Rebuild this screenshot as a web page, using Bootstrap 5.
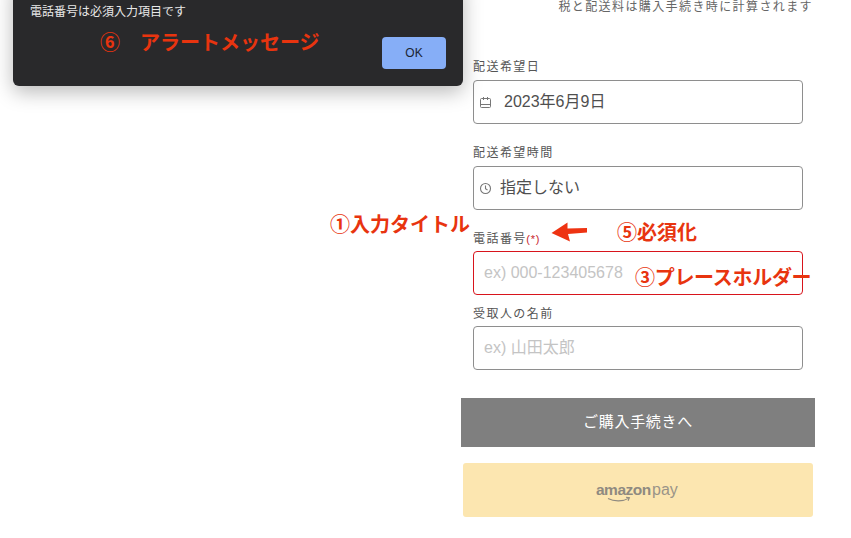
<!DOCTYPE html>
<html lang="ja">
<head>
<meta charset="utf-8">
<title>ご購入手続き</title>
<link href="https://cdn.jsdelivr.net/npm/bootstrap@5.3.0/dist/css/bootstrap.min.css" rel="stylesheet">
<style>
html,body{height:100%;overflow:hidden;background:#fff}
body{font-family:"Liberation Sans","Noto Sans CJK JP",sans-serif;position:relative;color:#4a4a4a}
.sheet{width:354px;margin-left:461px}
.taxnote{font-size:12px;line-height:12px;letter-spacing:1.4px;color:#666;text-align:right;padding:1px 2px 0 0;margin-bottom:47px}
.fieldbox{padding:0 12px}
.fieldlabel{display:block;font-size:12px;line-height:14px;letter-spacing:1.45px;color:#555;margin:0 0 6px}
.fieldctl{height:44px;border:1px solid #8e8e8e;border-radius:4px;display:flex;align-items:center;padding:0 10px;font-size:16px;color:#4f4f4f;background:#fff}
.fieldctl svg{flex:none;margin-left:-5px}
.gapdate{margin-bottom:22px}
.ph{color:#c4c4c4}
.req{color:#c8242c;font-size:11px;letter-spacing:.8px;margin-left:-.5px}
.err{border-color:#d8141c}
.buybtn{background:#7f7f7f;color:#fff;font-size:15px;letter-spacing:.7px;height:49px;border:0;border-radius:0;width:100%;display:flex;align-items:center;justify-content:center}
.amzbtn{background:#fce6b0;height:54px;margin:16px 2px 0;border-radius:3px;border:0;display:flex;align-items:center;justify-content:center;width:350px;padding:4px 0 0}
.alertbox{position:absolute;left:13px;top:-20px;width:450px;height:106px;background:#29292b;border-radius:0 0 6px 6px;box-shadow:0 6px 20px rgba(0,0,0,.28)}
.alerttext{position:absolute;left:17px;top:24px;font-size:12px;line-height:16px;color:#e8e8e8}
.okbtn{position:absolute;left:369px;top:57px;width:64px;height:32px;background:#86aef7;border:0;border-radius:4px;font-size:12px;color:#1b2433;padding:0}
.note{position:absolute;color:#e8340f;font-weight:700;white-space:nowrap;line-height:24px;font-size:20px;font-family:"Noto Sans CJK JP","Liberation Sans",sans-serif}
</style>
</head>
<body>
<main class="sheet">
  <p class="taxnote">税と配送料は購入手続き時に計算されます</p>
  <div class="fieldbox">
    <label class="fieldlabel">配送希望日</label>
    <div class="fieldctl gapdate">
      <svg width="13" height="13" viewBox="0 0 13 13" fill="none" stroke="#777" stroke-width="1"><rect x="1.5" y="2.5" width="10" height="9" rx="1"/><path d="M1.5 8.500h10M4.500 1v3M8.500 1v3"/></svg>
      <span style="margin-left:12px">2023年6月9日</span>
    </div>
    <label class="fieldlabel">配送希望時間</label>
    <div class="fieldctl">
      <svg width="13" height="13" viewBox="0 0 13 13" fill="none" stroke="#777" stroke-width="1.1"><circle cx="6.5" cy="6.5" r="5"/><path d="M6.5 3.5v3.2l2 1.3"/></svg>
      <span style="margin-left:8px">指定しない</span>
    </div>
    <label class="fieldlabel" style="margin-top:22px;margin-bottom:5px;height:14px">電話番号<span class="req">(*)</span></label>
    <div class="fieldctl err"><span class="ph">ex) 000-123405678</span></div>
    <label class="fieldlabel" style="margin-top:12px;margin-bottom:5px">受取人の名前</label>
    <div class="fieldctl"><span class="ph">ex) 山田太郎</span></div>
  </div>
  <button type="button" class="btn buybtn" style="margin-top:28px">ご購入手続きへ</button>
  <button type="button" class="btn amzbtn">
    <svg width="84" height="24" viewBox="0 0 84 24">
      <text x="0" y="15" font-family="Liberation Sans, sans-serif" font-size="15.5" font-weight="700" fill="#8f8a80" letter-spacing="-.5">amazon</text>
      <text x="56" y="15" font-family="Liberation Sans, sans-serif" font-size="16" fill="#9a9488">pay</text>
      <path d="M12 18.5c6 3.2 15 3.2 21-.4M30 17.2l3.4.5-1.3 3" fill="none" stroke="#8f8a80" stroke-width="1.1"/>
    </svg>
  </button>
</main>

<div class="alertbox" role="alertdialog">
  <div class="alerttext">電話番号は必須入力項目です</div>
  <button type="button" class="btn okbtn">OK</button>
</div>

<div class="note" style="left:100px;top:30px">⑥</div>
<div class="note" style="left:140px;top:30px">アラートメッセージ</div>
<div class="note" style="left:330px;top:212px">①入力タイトル</div>
<div class="note" style="left:617px;top:220px">⑤必須化</div>
<div class="note" style="left:635px;top:265px;letter-spacing:-.3px">③プレースホルダー</div>
<svg class="position-absolute" style="left:550px;top:222px" width="40" height="22" viewBox="0 0 40 22"><path d="M1.5 11 17.5.5 17.5 6.500 37 6 37 10.500 18 12 20 19.500z" fill="#ee3312"/></svg>
</body>
</html>
